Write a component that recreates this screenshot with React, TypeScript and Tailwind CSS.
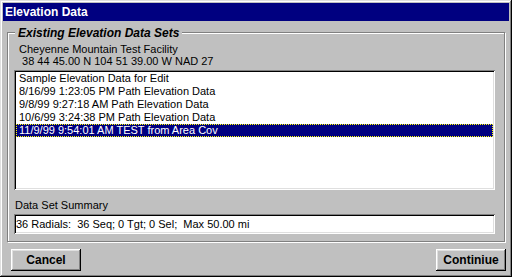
import React from 'react';

const dataSets = [
  'Sample Elevation Data for Edit',
  '8/16/99 1:23:05 PM Path Elevation Data',
  '9/8/99 9:27:18 AM Path Elevation Data',
  '10/6/99 3:24:38 PM Path Elevation Data',
  '11/9/99 9:54:01 AM TEST from Area Cov',
];

const sunken =
  'bg-white shadow-[inset_1px_1px_#808080,inset_-1px_-1px_#fff,inset_2px_2px_#000,inset_-2px_-2px_#dfdfdf]';

const Win95Button: React.FC<{ label: string }> = ({ label }) => (
  <button className="w-[70px] h-[22px] bg-[#c0c0c0] text-[12px] font-bold text-black flex items-center justify-center shadow-[inset_-1px_-1px_#000,inset_1px_1px_#fff,inset_-2px_-2px_#808080,inset_2px_2px_#dfdfdf]">
    {label}
  </button>
);

export default function App() {
  const selected = 4;

  return (
    <div className="w-[512px] h-[277px] bg-[#c0c0c0] p-[3px] font-['Liberation_Sans',Arial,sans-serif] text-black shadow-[inset_-1px_-1px_#000,inset_1px_1px_#dfdfdf,inset_-2px_-2px_#808080,inset_2px_2px_#fff] flex flex-col">
      {/* Title bar */}
      <div className="h-[18px] bg-[#000080] flex items-center pl-[2px]">
        <span className="text-white text-[12px] font-bold leading-none">Elevation Data</span>
      </div>

      {/* Group box */}
      <div className="relative mt-[11px] ml-[4px] w-[498px] h-[210px] border border-[#808080] shadow-[inset_1px_1px_#fff,1px_1px_#fff]">
        <div className="absolute left-[7px] top-[-7px] px-[3px] bg-[#c0c0c0] text-[12px] leading-[14px] font-bold italic">
          Existing Elevation Data Sets
        </div>

        <div className="pt-[10px] pl-[11px] text-[11px] leading-[12px]">
          <div>Cheyenne Mountain Test Facility</div>
          <div className="whitespace-pre"> 38 44 45.00 N 104 51 39.00 W NAD 27</div>
        </div>

        {/* Data set list */}
        <div className={`mt-[3px] ml-[6px] w-[481px] h-[120px] p-[2px] ${sunken}`}>
          {dataSets.map((item, i) => (
            <div
              key={item}
              className={`h-[13px] text-[11px] leading-[11px] whitespace-nowrap ${
                i === selected
                  ? 'bg-[#000080] text-white border border-dotted border-[#ffff00] pl-[2px]'
                  : 'pl-[3px] pt-[1px]'
              }`}
            >
              {item}
            </div>
          ))}
        </div>

        <div className="mt-[9px] ml-[7px] text-[11px] leading-[12px]">Data Set Summary</div>

        <div className={`mt-[3px] ml-[6px] w-[481px] h-[20px] pl-[2px] flex items-center text-[11px] whitespace-pre ${sunken}`}>
          36 Radials:  36 Seq; 0 Tgt; 0 Sel;  Max 50.00 mi
        </div>
      </div>

      {/* Buttons */}
      <div className="mt-[7px] pl-[8px] pr-[3px] flex justify-between">
        <Win95Button label="Cancel" />
        <Win95Button label="Continiue" />
      </div>
    </div>
  );
}
